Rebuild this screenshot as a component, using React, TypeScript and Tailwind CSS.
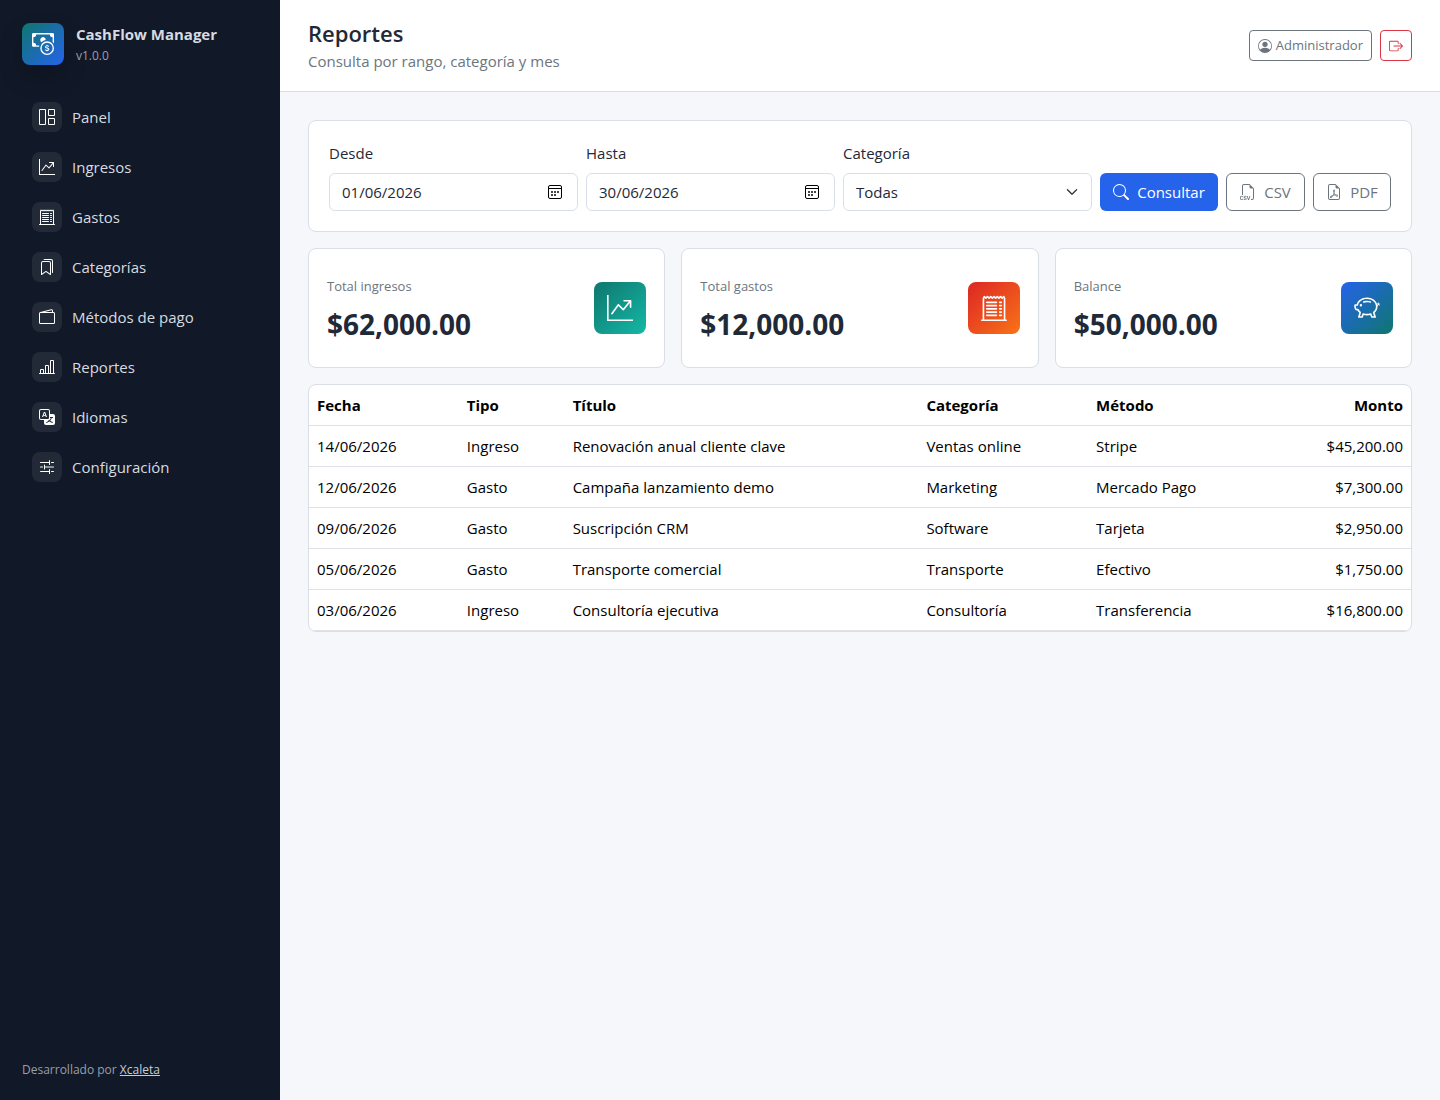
import type { ReactNode } from 'react';
import type { IconType } from 'react-icons';
import {
  BsBarChartLine,
  BsBookmarks,
  BsBoxArrowRight,
  BsCashCoin,
  BsChevronDown,
  BsFiletypeCsv,
  BsFileEarmarkPdf,
  BsGraphUpArrow,
  BsGrid1X2,
  BsPersonCircle,
  BsPiggyBank,
  BsReceiptCutoff,
  BsSearch,
  BsSliders2,
  BsTranslate,
  BsWallet2,
} from 'react-icons/bs';

const NAV_ITEMS: { label: string; icon: IconType }[] = [
  { label: 'Panel', icon: BsGrid1X2 },
  { label: 'Ingresos', icon: BsGraphUpArrow },
  { label: 'Gastos', icon: BsReceiptCutoff },
  { label: 'Categorías', icon: BsBookmarks },
  { label: 'Métodos de pago', icon: BsWallet2 },
  { label: 'Reportes', icon: BsBarChartLine },
  { label: 'Idiomas', icon: BsTranslate },
  { label: 'Configuración', icon: BsSliders2 },
];

const STATS: { label: string; value: string; icon: IconType; gradient: string }[] = [
  {
    label: 'Total ingresos',
    value: '$62,000.00',
    icon: BsGraphUpArrow,
    gradient: 'bg-[linear-gradient(135deg,#0f766e,#14b8a6)]',
  },
  {
    label: 'Total gastos',
    value: '$12,000.00',
    icon: BsReceiptCutoff,
    gradient: 'bg-[linear-gradient(135deg,#dc2626,#f97316)]',
  },
  {
    label: 'Balance',
    value: '$50,000.00',
    icon: BsPiggyBank,
    gradient: 'bg-[linear-gradient(135deg,#2563eb,#0f766e)]',
  },
];

const ROWS = [
  ['14/06/2026', 'Ingreso', 'Renovación anual cliente clave', 'Ventas online', 'Stripe', '$45,200.00'],
  ['12/06/2026', 'Gasto', 'Campaña lanzamiento demo', 'Marketing', 'Mercado Pago', '$7,300.00'],
  ['09/06/2026', 'Gasto', 'Suscripción CRM', 'Software', 'Tarjeta', '$2,950.00'],
  ['05/06/2026', 'Gasto', 'Transporte comercial', 'Transporte', 'Efectivo', '$1,750.00'],
  ['03/06/2026', 'Ingreso', 'Consultoría ejecutiva', 'Consultoría', 'Transferencia', '$16,800.00'],
];

const CARD = 'rounded-lg border border-[#d9dee8] bg-white';

function CalendarIcon() {
  return (
    <svg width="14" height="14" viewBox="0 0 14 14" fill="none" aria-hidden="true">
      <rect x="0.5" y="0.5" width="13" height="13" rx="1.5" stroke="#000" />
      <path d="M0.5 3.5h13" stroke="#000" />
      <path d="M3 6h2v2H3zM6 6h2v2H6zM9 6h2v2H9zM3 9h2v2H3zM6 9h2v2H6z" fill="#444" />
    </svg>
  );
}

function Field({ id, label, children }: { id: string; label: string; children: ReactNode }) {
  return (
    <div className="min-w-0 flex-1">
      <label htmlFor={id} className="mb-2 block leading-6">
        {label}
      </label>
      <div className="relative">{children}</div>
    </div>
  );
}

function DateField({ id, label, value }: { id: string; label: string; value: string }) {
  return (
    <Field id={id} label={label}>
      <input
        id={id}
        type="text"
        defaultValue={value}
        className="h-[38px] w-full rounded-md border border-[#d9dee8] bg-white px-3"
      />
      <button
        type="button"
        aria-label={`Abrir calendario: ${label}`}
        className="absolute inset-y-0 right-4 flex items-center"
      >
        <CalendarIcon />
      </button>
    </Field>
  );
}

function Sidebar() {
  return (
    <aside className="flex w-[280px] shrink-0 flex-col bg-[#111827] px-[22px] pt-[22px] pb-5 text-[#d7dbe0]">
      <div className="flex items-center gap-3">
        <span className="flex size-[42px] items-center justify-center rounded-lg bg-[linear-gradient(135deg,#0f766e,#2563eb)] text-white shadow-[0_12px_24px_rgba(0,0,0,0.2)]">
          <BsCashCoin className="size-[22px]" />
        </span>
        <div>
          <div className="text-[15px] leading-6 font-bold">CashFlow Manager</div>
          <div className="text-xs leading-5 text-[#9a9fa8]">v1.0.0</div>
        </div>
      </div>

      <nav className="mt-7 flex flex-col gap-1">
        {NAV_ITEMS.map(({ label, icon: Icon }) => (
          <a key={label} href="#" className="flex items-center gap-[10px] rounded-lg px-[10px] py-2">
            <span className="flex size-[30px] items-center justify-center rounded-lg bg-white/8 text-white">
              <Icon className="size-4" />
            </span>
            {label}
          </a>
        ))}
      </nav>

      <p className="mt-auto text-xs leading-5 text-[#9a9fa8]">
        Desarrollado por{' '}
        <a href="#" className="text-[#c9ced6] underline">
          Xcaleta
        </a>
      </p>
    </aside>
  );
}

function Header() {
  return (
    <header className="flex items-center justify-between border-b border-[#d9dee8] bg-white px-7 py-[18px]">
      <div>
        <h1 className="text-[22px] leading-[31px] font-semibold">Reportes</h1>
        <p className="leading-6 text-[#6c757d]">Consulta por rango, categoría y mes</p>
      </div>
      <div className="flex gap-2">
        <button
          type="button"
          className="flex h-[31px] items-center gap-1 rounded border border-[#6c757d] px-2 text-[13px] text-[#6c757d]"
        >
          <BsPersonCircle className="size-[14px]" />
          Administrador
        </button>
        <button
          type="button"
          aria-label="Salir"
          className="flex h-[31px] items-center rounded border border-[#dc3545] px-2 text-[#dc3545]"
        >
          <BsBoxArrowRight className="size-[14px]" />
        </button>
      </div>
    </header>
  );
}

function Filters() {
  return (
    <form className={`${CARD} flex items-end gap-2 p-5`} onSubmit={(e) => e.preventDefault()}>
      <DateField id="desde" label="Desde" value="01/06/2026" />
      <DateField id="hasta" label="Hasta" value="30/06/2026" />
      <Field id="categoria" label="Categoría">
        <select
          id="categoria"
          className="h-[38px] w-full appearance-none rounded-md border border-[#d9dee8] bg-white px-3"
        >
          <option>Todas</option>
        </select>
        <BsChevronDown className="pointer-events-none absolute top-[13px] right-[14px] size-3 stroke-1" />
      </Field>
      <button
        type="submit"
        className="flex h-[38px] w-[118px] items-center justify-center gap-2 rounded-md bg-[#2563eb] text-white"
      >
        <BsSearch className="size-4" />
        Consultar
      </button>
      <button
        type="button"
        className="flex h-[38px] w-[79px] items-center justify-center gap-2 rounded-md border border-[#6c757d] text-[#6c757d]"
      >
        <BsFiletypeCsv className="size-4" />
        CSV
      </button>
      <button
        type="button"
        className="flex h-[38px] w-[78px] items-center justify-center gap-2 rounded-md border border-[#6c757d] text-[#6c757d]"
      >
        <BsFileEarmarkPdf className="size-4" />
        PDF
      </button>
    </form>
  );
}

function ReportTable() {
  return (
    <div className={`${CARD} overflow-hidden`}>
      <table className="w-full table-fixed border-collapse text-left leading-6 text-black">
        <colgroup>
          <col className="w-[13.6%]" />
          <col className="w-[9.6%]" />
          <col className="w-[32.1%]" />
          <col className="w-[15.4%]" />
          <col className="w-[15.3%]" />
          <col />
        </colgroup>
        <thead>
          <tr className="border-b border-[#dee2e6]">
            {['Fecha', 'Tipo', 'Título', 'Categoría', 'Método', 'Monto'].map((title) => (
              <th key={title} className="p-2 font-bold last:text-right">
                {title}
              </th>
            ))}
          </tr>
        </thead>
        <tbody>
          {ROWS.map((row) => (
            <tr key={row[0]} className="border-b border-[#dee2e6]">
              {row.map((cell) => (
                <td key={cell} className="p-2 last:text-right">
                  {cell}
                </td>
              ))}
            </tr>
          ))}
        </tbody>
      </table>
    </div>
  );
}

export default function App() {
  return (
    <div className="flex min-h-screen bg-[#f5f7fb] font-['Segoe_UI','Open_Sans',sans-serif] text-[15px] text-[#1f2937]">
      <Sidebar />
      <div className="min-w-0 flex-1">
        <Header />
        <main className="flex flex-col gap-4 p-7">
          <Filters />
          <section className="grid grid-cols-3 gap-4">
            {STATS.map(({ label, value, icon: Icon, gradient }) => (
              <article
                key={label}
                className={`${CARD} flex h-[120px] items-center justify-between px-[18px]`}
              >
                <div className="pt-1">
                  <div className="text-[13px] leading-5 text-[#6c757d]">{label}</div>
                  <div className="mt-2 text-[28px] leading-10 font-bold">{value}</div>
                </div>
                <span
                  className={`flex size-[52px] items-center justify-center rounded-lg text-white ${gradient}`}
                >
                  <Icon className="size-[26px]" />
                </span>
              </article>
            ))}
          </section>
          <ReportTable />
        </main>
      </div>
    </div>
  );
}
